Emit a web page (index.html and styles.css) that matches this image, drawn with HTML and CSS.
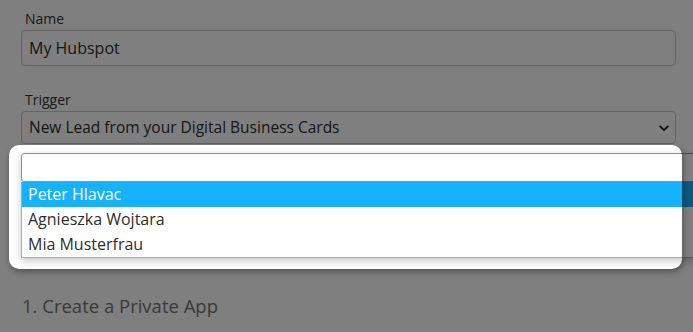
FILE: index.html
```html
<!DOCTYPE html>
<html lang="en">
<head>
<meta charset="utf-8">
<title>Hubspot integration</title>
<link rel="stylesheet" href="styles.css">
</head>
<body>
<div class="page">
  <div class="field field-name">
    <label class="label">Name</label>
    <div class="input">My Hubspot</div>
  </div>
  <div class="field field-trigger">
    <label class="label">Trigger</label>
    <div class="select">
      <span class="select-text">New Lead from your Digital Business Cards</span>
      <svg class="chev" width="10" height="7" viewBox="0 0 10 7"><path d="M1.2 1.4 L5 5.2 L8.8 1.4" fill="none" stroke="#222" stroke-width="1.9" stroke-linecap="round" stroke-linejoin="round"/></svg>
    </div>
    <div class="dropdown">
      <div class="search"></div>
      <ul class="options">
        <li class="opt opt-active">Peter Hlavac</li>
        <li class="opt">Agnieszka Wojtara</li>
        <li class="opt">Mia Musterfrau</li>
      </ul>
    </div>
  </div>
  <h2 class="step">1. Create a Private App</h2>
</div>
<div class="spotlight"></div>
</body>
</html>
```

FILE: styles.css
```css
html, body {
  margin: 0;
  padding: 0;
  overflow: hidden;
  background: #ffffff;
}

body {
  font-family: "Open Sans", "Noto Sans", sans-serif;
  color: #333333;
  height: 332px;
  position: relative;
}

.page {
  padding: 9px 17px 0 21px;
}

.field {
  display: flex;
  flex-direction: column;
}

.field-name {
  margin-bottom: 24px;
}

.field-trigger {
  position: relative;
}

.label {
  font-size: 14px;
  line-height: 19px;
  padding-left: 4px;
  margin-bottom: 2px;
  color: #333333;
}

.input {
  box-sizing: border-box;
  height: 36px;
  border: 1px solid #c8c8c8;
  border-radius: 4px;
  padding: 0 7px;
  font-size: 16px;
  line-height: 34px;
  color: #2e2e2e;
}

.select {
  box-sizing: border-box;
  height: 33px;
  border: 1px solid #c8c8c8;
  border-radius: 4px;
  padding: 0 6px 0 7px;
  font-size: 15.5px;
  line-height: 31px;
  color: #2e2e2e;
  display: flex;
  align-items: center;
  justify-content: space-between;
}

.chev {
  display: block;
  margin-top: 2px;
}

.dropdown {
  position: absolute;
  top: calc(100% + 9px);
  left: 0;
  right: -40px;
  background: #ffffff;
  box-shadow: 0 3px 8px rgba(0, 0, 0, 0.22);
  border-radius: 3px 3px 0 0;
}

.search {
  box-sizing: border-box;
  height: 29px;
  border: 1px solid #6f8ef4;
  border-radius: 3px;
  background: #ffffff;
}

.options {
  list-style: none;
  margin: 0;
  padding: 0;
  border: 1px solid #aaaaaa;
  border-top: 0;
}

.opt {
  font-size: 16px;
  line-height: 21px;
  padding: 2px 6px;
  color: #2e2e2e;
}

.opt-active {
  background: #16b1ff;
  color: #ffffff;
}

.step {
  margin: 150px 0 0 1px;
  font-size: 18.5px;
  font-weight: 400;
  line-height: 24px;
  color: #747474;
}

.spotlight {
  position: absolute;
  left: 9px;
  top: 145px;
  width: 673px;
  height: 124px;
  border-radius: 10px;
  pointer-events: none;
  z-index: 10;
  box-shadow: 1px 3px 6px rgba(0, 0, 0, 0.35), 0 0 0 2000px rgba(0, 0, 0, 0.5);
}
```
